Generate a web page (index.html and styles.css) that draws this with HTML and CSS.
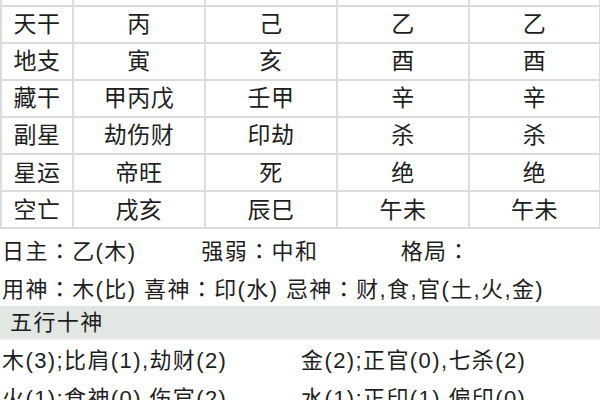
FILE: index.html
```html
<!DOCTYPE html>
<html lang="zh-CN">
<head>
<meta charset="utf-8">
<title>八字</title>
<link rel="stylesheet" href="styles.css">
</head>
<body>
<div class="page">
  <div class="table-wrap">
    <table class="chart">
      <colgroup>
        <col class="c-label"><col class="c-col"><col class="c-col"><col class="c-col"><col class="c-last">
      </colgroup>
      <tr class="cut"><td></td><td></td><td></td><td></td><td></td></tr>
      <tr><td>天干</td><td>丙</td><td>己</td><td>乙</td><td>乙</td></tr>
      <tr><td>地支</td><td>寅</td><td>亥</td><td>酉</td><td>酉</td></tr>
      <tr><td>藏干</td><td>甲丙戊</td><td>壬甲</td><td>辛</td><td>辛</td></tr>
      <tr><td>副星</td><td>劫伤财</td><td>印劫</td><td>杀</td><td>杀</td></tr>
      <tr><td>星运</td><td>帝旺</td><td>死</td><td>绝</td><td>绝</td></tr>
      <tr><td>空亡</td><td>戌亥</td><td>辰巳</td><td>午未</td><td>午未</td></tr>
    </table>
  </div>
  <div class="info">
    <div class="line triple">
      <span class="cell">日主<span class="colon" lang="zh-TW">：</span>乙(木)</span>
      <span class="cell">强弱<span class="colon" lang="zh-TW">：</span>中和</span>
      <span class="cell">格局<span class="colon" lang="zh-TW">：</span></span>
    </div>
    <div class="line">用神<span class="colon" lang="zh-TW">：</span>木(比) 喜神<span class="colon" lang="zh-TW">：</span>印(水) 忌神<span class="colon" lang="zh-TW">：</span>财,食,官(土,火,金)</div>
  </div>
  <div class="band">五行十神</div>
  <div class="wuxing">
    <div class="line pair"><span class="half">木(3);比肩(1),劫财(2)</span><span class="half">金(2);正官(0),七杀(2)</span></div>
    <div class="line pair"><span class="half">火(1);食神(0),伤官(2)</span><span class="half">水(1);正印(1),偏印(0)</span></div>
  </div>
</div>
</body>
</html>
```
FILE: styles.css
```css
html, body {
  margin: 0;
  padding: 0;
  background: #ffffff;
}
body {
  width: 600px;
  height: 400px;
  overflow: hidden;
  font-family: "Liberation Sans", "Noto Sans CJK SC", sans-serif;
  color: #1e1e1e;
}
.page {
  width: 600px;
}
.table-wrap {
  overflow: hidden;
  height: 230px;
}
.chart {
  border-collapse: collapse;
  width: 599px;
  table-layout: fixed;
  margin-top: -32.5px;
  font-size: 23px;
  letter-spacing: 0.5px;
}
.c-label { width: 72px; }
.c-col { width: 132px; }
.c-last { width: 131px; }
.chart td {
  border: 2px solid #dcdcdc;
  height: 35.1px;
  padding: 0;
  text-align: center;
  vertical-align: middle;
  line-height: 34px;
}
.info {
  padding-left: 2px;
  font-size: 22px;
  letter-spacing: 1.4px;
}
.colon {
  font-family: "Noto Sans CJK TC", sans-serif;
}
.line {
  height: 38px;
  line-height: 38px;
  white-space: nowrap;
}
.triple {
  display: flex;
}
.triple .cell {
  width: 200px;
}
.band {
  height: 33px;
  line-height: 33px;
  background: #e2e7e4;
  padding-left: 10px;
  font-size: 22px;
  letter-spacing: 1.4px;
  border-bottom: 1px solid #eef0ef;
}
.wuxing {
  padding-left: 2px;
  font-size: 22px;
  letter-spacing: 1.4px;
  padding-top: 2px;
}
.pair {
  display: flex;
}
.pair .half {
  width: 300px;
}
```
